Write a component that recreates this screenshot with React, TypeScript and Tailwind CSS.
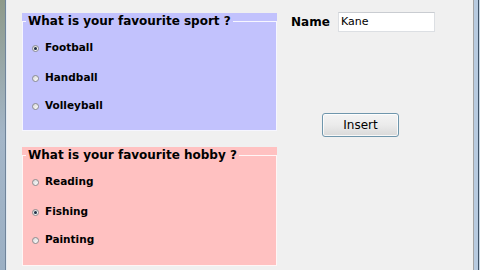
import React from "react";

type Group = {
  title: string;
  bg: string;
  options: string[];
  checked: string;
};

const groups: Group[] = [
  {
    title: "What is your favourite sport ?",
    bg: "bg-[#c2c2fd]",
    options: ["Football", "Handball", "Volleyball"],
    checked: "Football",
  },
  {
    title: "What is your favourite hobby ?",
    bg: "bg-[#ffc1c1]",
    options: ["Reading", "Fishing", "Painting"],
    checked: "Fishing",
  },
];

const font = "font-['DejaVu_Sans',Verdana,sans-serif]";

function Radio({ on }: { on: boolean }) {
  return (
    <span className="flex size-[7px] shrink-0 items-center justify-center rounded-full border border-[#8b8d90] bg-gradient-to-br from-[#d6d6d6] to-white">
      {on ? <span className="size-[3px] rounded-full bg-[#1f2f45]" /> : null}
    </span>
  );
}

function GroupBox({ group, className }: { group: Group; className: string }) {
  return (
    <div className={`${group.bg} ${className}`}>
      <fieldset className="m-0 h-full border border-white/85 p-0">
        <legend
          className={`${font} ml-[3px] px-[2px] text-[12px] font-bold leading-[16px] text-black`}
        >
          {group.title}
        </legend>
        <div className="flex flex-col pl-[9px]">
          {group.options.map((opt, i) => (
            <label
              key={opt}
              className={`flex h-[20px] items-center gap-[6px] ${
                i === 0 ? "mt-[9px]" : i === 1 ? "mt-[10px]" : "mt-[8px]"
              }`}
            >
              <Radio on={opt === group.checked} />
              <span className={`${font} text-[10.5px] font-bold text-black`}>{opt}</span>
            </label>
          ))}
        </div>
      </fieldset>
    </div>
  );
}

export default function App() {
  return (
    <div className="flex h-[270px] w-[480px] overflow-hidden bg-[#f0f0f0]">
      {/* window frame, left */}
      <div className="flex w-[7px] shrink-0">
        <div className="w-[5px] bg-gradient-to-b from-[#8e9a8a] via-[#a4b6c8] to-[#9cb0c4]" />
        <div className="w-px bg-[#70849a]" />
        <div className="w-px bg-[#e4ebf2]" />
      </div>

      <div className="flex flex-1">
        <div className="ml-[15px] flex w-[255px] flex-col pt-[13px]">
          <GroupBox group={groups[0]} className="h-[118px]" />
          <GroupBox group={groups[1]} className="mt-[16px] h-[119px]" />
        </div>

        <div className="ml-[14px] flex flex-col pt-[12px]">
          <div className="flex h-[20px] items-center">
            <span className={`${font} w-[47px] text-[12px] font-bold text-black`}>Name</span>
            <div className="flex h-[20px] w-[97px] items-center border border-[#dcdfe3] border-t-[#c9ccd1] bg-white px-[2px]">
              <span className={`${font} text-[11px] text-black`}>Kane</span>
            </div>
          </div>
          <button className="ml-[31px] mt-[81px] flex h-[24px] w-[77px] items-center justify-center rounded-[3px] border border-[#6f96ac] bg-gradient-to-b from-[#f4f4f4] via-[#ebebeb] to-[#d9d9d9] shadow-[inset_0_0_0_1px_rgba(255,255,255,0.8)]">
            <span className={`${font} text-[12px] text-black`}>Insert</span>
          </button>
        </div>
      </div>

      {/* window frame, right */}
      <div className="flex w-[7px] shrink-0">
        <div className="w-px bg-[#a3a3a3]" />
        <div className="w-[4px] bg-[#b8cbe0]" />
        <div className="w-px bg-[#3f5266]" />
        <div className="w-px bg-[#c8d6e4]" />
      </div>
    </div>
  );
}
